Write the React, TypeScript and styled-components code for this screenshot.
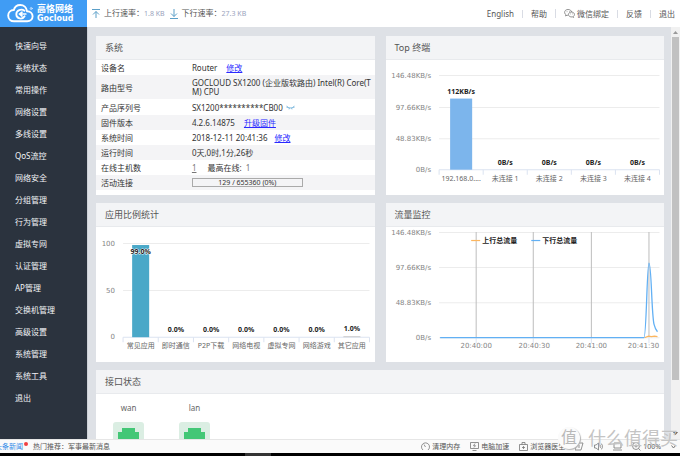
import React from "react";
import styled, { createGlobalStyle } from "styled-components";

const uiFont = `"Noto Sans", "Noto Sans CJK SC", sans-serif`;

const GlobalStyle = createGlobalStyle`
  * { box-sizing: border-box; }
  body { margin: 0; background: #dee1e6; color: #444; font: 8px/12px ${uiFont}; }
  ul { list-style: none; margin: 0; padding: 0; }
  h2 { margin: 0; }
  svg { display: block; flex: none; }
`;

const Shell = styled.div`
  position: relative;
  height: 100vh;
  display: flex;
  flex-direction: column;
  overflow: hidden;
`;

const TopBar = styled.header`
  flex: none;
  height: 27px;
  display: flex;
  align-items: stretch;
  background: #fff;
`;

const Brand = styled.a`
  width: 87px;
  display: flex;
  align-items: center;
  gap: 3px;
  padding-left: 7px;
  background: #409cf4;
  color: #fff;
  text-decoration: none;
`;

const BrandText = styled.span`
  display: flex;
  flex-direction: column;
  font-weight: 700;
`;

const BrandChinese = styled.span`
  font-size: 9px;
  line-height: 10px;
`;

const BrandLatin = styled.span`
  font: 700 8px/10px "DejaVu Sans", sans-serif;
`;

const Rates = styled.div`
  display: flex;
  align-items: center;
  gap: 5px;
  padding-left: 5px;
`;

const Rate = styled.span`
  display: flex;
  align-items: center;
  gap: 4px;
  color: #555;
  white-space: nowrap;
`;

const RateValue = styled.span`
  color: #9aa3bd;
  font-size: 7px;
`;

const TopLinks = styled.nav`
  margin-left: auto;
  display: flex;
  align-items: center;
  padding-right: 5px;
`;

const TopLink = styled.a`
  display: flex;
  align-items: center;
  gap: 2px;
  padding: 0 8px;
  line-height: 8px;
  color: #555;
  text-decoration: none;
  white-space: nowrap;
  & + & { border-left: 1px solid #d9dce4; }
  &:last-child { padding-right: 0; }
`;

const Body = styled.div`
  flex: 1;
  min-height: 0;
  display: flex;
`;

const Sidebar = styled.nav`
  flex: none;
  width: 87px;
  padding-top: 8px;
  background: #2b333e;
`;

const SideLink = styled.a`
  display: block;
  padding-left: 15px;
  line-height: 22px;
  color: #f2f4f6;
  text-decoration: none;
`;

const Main = styled.main`
  flex: 1;
  min-width: 0;
  overflow: hidden;
  display: grid;
  grid-template-columns: 1fr 1fr;
  align-content: start;
  gap: 8px 11px;
  padding: 9px 7px 0 8px;
  border-left: 1px solid #cdd1d7;
`;

const Card = styled.section<{ $wide?: boolean }>`
  grid-column: ${(p) => (p.$wide ? "1 / -1" : "auto")};
  min-width: 0;
  background: #fff;
`;

const CardTitle = styled.h2`
  height: 24px;
  padding-left: 9px;
  border-bottom: 1px solid #e8eaed;
  background: #f3f4f6;
  color: #555;
  font-size: 9px;
  font-weight: 400;
  line-height: 24px;
`;

const InfoTable = styled.table`
  width: 100%;
  border-collapse: collapse;
  color: #333;
`;

const InfoRow = styled.tr<{ $height?: number }>`
  height: ${(p) => p.$height ?? 15}px;
  &:nth-child(even) { background: #f4f4f6; }
`;

const InfoLabel = styled.th`
  width: 33%;
  padding: 0 0 0 5px;
  font-weight: 400;
  text-align: left;
  line-height: 9px;
`;

const InfoValue = styled.td`
  padding: 0 2px 0 4px;
  line-height: 9px;
`;

const ValueLine = styled.span<{ $gap?: number }>`
  display: flex;
  align-items: center;
  gap: ${(p) => p.$gap ?? 9}px;
`;

const EditLink = styled.a`
  color: #2a2aff;
`;

const CountLink = styled.a`
  color: #777;
`;

const Peak = styled.span`
  margin-left: 2px;
  color: #777;
`;

const ConnectionBar = styled.div`
  width: 111px;
  height: 9px;
  border: 1px solid #aaa;
  font-size: 7px;
  line-height: 7px;
  text-align: center;
`;

const ChartSvg = styled.svg`
  width: 100%;
  height: auto;
`;

const AxisText = styled.text`
  font: 7px "DejaVu Sans", "Noto Sans CJK SC", sans-serif;
  fill: #858585;
`;

const CategoryText = styled.text`
  font: 7px ${uiFont};
  fill: #666;
`;

const ValueText = styled.text`
  font: 700 7px ${uiFont};
  fill: #222;
  stroke: #fff;
  stroke-width: 1px;
  paint-order: stroke;
`;

const Ports = styled.ul`
  display: flex;
  padding: 8px 0 0 17px;
`;

const Port = styled.li`
  width: 66px;
`;

const PortBody = styled.div`
  width: 31px;
  display: flex;
  flex-direction: column;
  align-items: center;
  gap: 8px;
  color: #666;
`;

const ScrollTrack = styled.div`
  flex: none;
  width: 9px;
  display: flex;
  flex-direction: column;
  align-items: center;
  justify-content: space-between;
  padding: 4px 0;
  background: #f1f1f1;
`;

const ScrollThumb = styled.div`
  flex: 0 0 85%;
  width: 7px;
  margin: 3px 0 auto;
  background: #c1c1c1;
`;

const StatusBar = styled.footer`
  flex: none;
  height: 14px;
  display: flex;
  align-items: center;
  border-top: 1px solid #e6e6e6;
  background: #fafafa;
  color: #555;
  font-size: 7px;
  line-height: 12px;
  white-space: nowrap;
`;

const NewsLink = styled.a`
  display: flex;
  margin-left: -5px;
  color: #2f8ae8;
  text-decoration: none;
`;

const NewsDot = styled.span`
  width: 4px;
  height: 4px;
  margin: 1px 0 0 1px;
  border-radius: 50%;
  background: #f04040;
`;

const Hot = styled.span`
  margin-left: 5px;
`;

const Tools = styled.div`
  margin-left: auto;
  display: flex;
  align-items: center;
  gap: 10px;
  padding-right: 4px;
`;

const Tool = styled.button`
  display: flex;
  align-items: center;
  gap: 2px;
  padding: 0;
  border: 0;
  background: none;
  color: inherit;
  font: inherit;
`;

const TaskStrip = styled.div`
  flex: none;
  height: 3px;
  display: flex;
  background: #000;
`;

const TaskActive = styled.div`
  width: 26px;
  margin-left: 36%;
  background: #333;
`;

const Watermark = styled.div`
  position: absolute;
  right: 2px;
  bottom: 6px;
  display: flex;
  align-items: center;
  gap: 8px;
  color: #c4c4c4;
  font-size: 18px;
  line-height: 24px;
  pointer-events: none;
`;

const WatermarkSeal = styled.span`
  width: 22px;
  height: 22px;
  border-radius: 50%;
  background: #fbfbfb;
  box-shadow: 1px 1px 1px #b4b4b4;
  color: #b8b8b8;
  font-size: 16px;
  line-height: 21px;
  text-align: center;
`;

const menu = ["快速向导", "系统状态", "常用操作", "网络设置", "多线设置", "QoS流控", "网络安全", "分组管理", "行为管理", "虚拟专网", "认证管理", "AP管理", "交换机管理", "高级设置", "系统管理", "系统工具", "退出"];

const CloudLogo = () => (
  <svg width="27" height="19" viewBox="0 0 27 19" fill="none" stroke="#fff" strokeLinecap="round">
    <path d="M20 7.2C19.5 3.6 16.8 1 13.3 1C10 1 7.6 3 6.8 6C3.500 6 1.200 8.500 1.200 11.600C1.200 15 3.800 17.300 7 17.300H20.200C23.300 17.300 25.600 15.200 25.600 12.300C25.600 9.400 23.200 7.300 20 7.200" strokeWidth="1.900" />
    <path d="M17.500 6.800C14.500 4.600 9.300 6 9.300 10.300C9.300 15 15.500 16 17.600 12.300" strokeWidth="1.800" />
    <path d="M13 10H18.800M15 8.200L12.700 10L15 12" strokeWidth="1.700" />
    <circle cx="24.200" cy="4.500" r="1" strokeWidth=".6" />
  </svg>
);

const RateIcon = ({ down }: { down?: boolean }) => (
  <svg width="8" height="10" viewBox="0 0 8 10" fill="none" stroke="#5b9fc8" strokeWidth="1">
    {down ? <path d="M4 0V7.500M1 4.500L4 7.500L7 4.500M0 9.500H8" /> : <path d="M0 .5H8M4 9V2.500M1 5.500L4 2.500L7 5.500" />}
  </svg>
);

const WechatIcon = () => (
  <svg width="11" height="9" viewBox="0 0 11 9" fill="none" stroke="#777" strokeWidth=".8">
    <path d="M4.300 6.300L3 6.200L1.600 7L1.900 5.700C-.5 4 .6 .5 4 .5C6 .5 7.400 1.500 7.600 3" />
    <path d="M9.400 7.400L9.600 8.500L8.500 7.900C6.300 8.300 4.500 7.200 4.500 5.500C4.500 2.600 9.300 2.200 10.300 4.700C10.700 5.700 10.300 6.700 9.400 7.400Z" />
    <path d="M2.700 2.700h.7M5 2.700h.7M6.200 4.900h.6M8.300 4.900h.6" />
  </svg>
);

const EyeClosed = () => (
  <svg width="9" height="5" viewBox="0 0 9 5" fill="none" stroke="#6aaed8" strokeWidth=".9">
    <path d="M.5 .8C2 3.600 7 3.600 8.500 .8M1.500 2L.8 3M3.300 3L3 4.300M5.700 3L6 4.300M7.500 2L8.200 3" />
  </svg>
);

const PortIcon = () => (
  <svg width="31" height="31" viewBox="0 0 31 31">
    <rect width="31" height="31" rx="3" fill="#dbeee3" />
    <path d="M5 25V10H9V6H22V10H26V25Z" fill="#43c776" />
  </svg>
);

type Bar = { label: string; value: string; height: number };

type BarChartProps = {
  name: string;
  left: number;
  right: number;
  lines: { y: number; label: string }[];
  bars: Bar[];
  barWidth: number;
  color: string;
  inside?: boolean;
};

const BarChart = ({ name, left, right, lines, bars, barWidth, color, inside }: BarChartProps) => {
  const step = (right - left) / bars.length;
  const base = lines[lines.length - 1].y;
  return (
    <ChartSvg viewBox="0 0 278 135" role="img" aria-label={name}>
      {lines.map((l) => (
        <g key={l.label}>
          <path d={`M${left} ${l.y}H${right}`} stroke={l.y === base ? "#dbe3f1" : "#ececec"} />
          <AxisText x={left - 8} y={l.y + 2} textAnchor="end">{l.label}</AxisText>
        </g>
      ))}
      {Array.from({ length: bars.length + 1 }, (_, i) => (
        <path key={i} d={`M${left + i * step} ${base}v5`} stroke="#dbe3f1" />
      ))}
      {bars.map((b, i) => {
        const cx = left + (i + 0.5) * step;
        const labelY = inside && b.height > 20 ? base - b.height + 9 : base - b.height - 5;
        return (
          <g key={b.label}>
            <rect x={cx - barWidth / 2} y={base - b.height} width={barWidth} height={b.height} fill={b.height > 2 ? color : "#ccc"} />
            <ValueText x={cx} y={labelY} textAnchor="middle">{b.value}</ValueText>
            <CategoryText x={cx} y={base + 11} textAnchor="middle">{b.label}</CategoryText>
          </g>
        );
      })}
    </ChartSvg>
  );
};

const trafficLines = [
  { y: 5.5, label: "146.48KB/s" },
  { y: 40.5, label: "97.66KB/s" },
  { y: 75.5, label: "48.83KB/s" },
  { y: 110.5, label: "0B/s" },
];

const times = [
  { x: 90, tx: 90, label: "20:40:00" },
  { x: 147, tx: 148, label: "20:40:30" },
  { x: 205, tx: 205, label: "20:41:00" },
  { x: 262.5, tx: 257, label: "20:41:30" },
];

const TrafficChart = () => (
  <ChartSvg viewBox="0 0 278 135" role="img" aria-label="流量监控">
    {trafficLines.map((l) => (
      <g key={l.label}>
        <path d={`M53 ${l.y}H273`} stroke="#ececec" />
        <AxisText x="45" y={l.y + 2} textAnchor="end">{l.label}</AxisText>
      </g>
    ))}
    {times.map((t) => (
      <g key={t.label}>
        <path d={`M${t.x} 5V110`} stroke="#bdbdbd" />
        <path d={`M${t.x} 111v5`} stroke="#dbe3f1" />
        <AxisText x={t.tx} y="121" textAnchor="middle">{t.label}</AxisText>
      </g>
    ))}
    <path d="M258 110.500L262 109L265 109.500L268 109L271 109.500" fill="none" stroke="#fcb65f" strokeWidth="1.200" />
    <path d="M54 110.500H257.500C260 110.500 260.500 36 262.500 36C265 36 265 86 267.500 97C268.500 101 269.500 103 271 104.500" fill="none" stroke="#62b0f4" strokeWidth="1.300" />
    <path d="M85 13.500h9" stroke="#fcb65f" strokeWidth="1.200" />
    <ValueText x="96" y="16">上行总流量</ValueText>
    <path d="M145 13.500h9" stroke="#62b0f4" strokeWidth="1.200" />
    <ValueText x="156" y="16">下行总流量</ValueText>
  </ChartSvg>
);

const ToolIcon = ({ d }: { d: string }) => (
  <svg width="9" height="9" viewBox="0 0 9 9" fill="none" stroke="#777" strokeWidth=".8"><path d={d} /></svg>
);

const idle = (n: number): Bar => ({ label: `未连接 ${n}`, value: "0B/s", height: 0 });
const emptyApp = (label: string): Bar => ({ label, value: "0.0%", height: 0 });

export default function App() {
  return (
    <Shell>
      <GlobalStyle />
      <TopBar>
        <Brand href="#" aria-label="高恪网络 Gocloud">
          <CloudLogo />
          <BrandText>
            <BrandChinese>高恪网络</BrandChinese>
            <BrandLatin>Gocloud</BrandLatin>
          </BrandText>
        </Brand>
        <Rates>
          <Rate><RateIcon /><span>上行速率：<RateValue>1.8 KB</RateValue></span></Rate>
          <Rate><RateIcon down /><span>下行速率：<RateValue>27.3 KB</RateValue></span></Rate>
        </Rates>
        <TopLinks>
          <TopLink href="#">English</TopLink>
          <TopLink href="#">帮助</TopLink>
          <TopLink href="#"><WechatIcon />微信绑定</TopLink>
          <TopLink href="#">反馈</TopLink>
          <TopLink href="#">退出</TopLink>
        </TopLinks>
      </TopBar>

      <Body>
        <Sidebar>
          <ul>{menu.map((m) => <li key={m}><SideLink href="#">{m}</SideLink></li>)}</ul>
        </Sidebar>
        <Main>
          <Card>
            <CardTitle>系统</CardTitle>
            <InfoTable>
              <tbody>
                <InfoRow><InfoLabel scope="row">设备名</InfoLabel><InfoValue><ValueLine>Router <EditLink href="#">修改</EditLink></ValueLine></InfoValue></InfoRow>
                <InfoRow $height={24}><InfoLabel scope="row">路由型号</InfoLabel><InfoValue>GOCLOUD SX1200 (企业版软路由) Intel(R) Core(T<br />M) CPU</InfoValue></InfoRow>
                <InfoRow $height={16}><InfoLabel scope="row">产品序列号</InfoLabel><InfoValue><ValueLine $gap={3}>SX1200**********CB00 <EyeClosed /></ValueLine></InfoValue></InfoRow>
                <InfoRow><InfoLabel scope="row">固件版本</InfoLabel><InfoValue><ValueLine>4.2.6.14875 <EditLink href="#">升级固件</EditLink></ValueLine></InfoValue></InfoRow>
                <InfoRow><InfoLabel scope="row">系统时间</InfoLabel><InfoValue><ValueLine $gap={7}>2018-12-11 20:41:36 <EditLink href="#">修改</EditLink></ValueLine></InfoValue></InfoRow>
                <InfoRow><InfoLabel scope="row">运行时间</InfoLabel><InfoValue>0天,0时,1分,26秒</InfoValue></InfoRow>
                <InfoRow><InfoLabel scope="row">在线主机数</InfoLabel><InfoValue><ValueLine $gap={11}><CountLink href="#">1</CountLink><span>最高在线: <Peak>1</Peak></span></ValueLine></InfoValue></InfoRow>
                <InfoRow><InfoLabel scope="row">活动连接</InfoLabel><InfoValue><ConnectionBar>129 / 655360 (0%)</ConnectionBar></InfoValue></InfoRow>
              </tbody>
            </InfoTable>
          </Card>

          <Card>
            <CardTitle>Top 终端</CardTitle>
            <BarChart
              name="Top 终端"
              left={53}
              right={273}
              barWidth={22}
              color="#7cb5ec"
              lines={[{ y: 15.5, label: "146.48KB/s" }, { y: 47.5, label: "97.66KB/s" }, { y: 78.5, label: "48.83KB/s" }, { y: 109.5, label: "0B/s" }]}
              bars={[{ label: "192.168.0....", value: "112KB/s", height: 71 }, idle(1), idle(2), idle(3), idle(4)]}
            />
          </Card>

          <Card>
            <CardTitle>应用比例统计</CardTitle>
            <BarChart
              name="应用比例统计"
              left={27}
              right={273}
              barWidth={17}
              color="#4aa8c8"
              inside
              lines={[{ y: 16.5, label: "100" }, { y: 63.5, label: "50" }, { y: 110, label: "0" }]}
              bars={[{ label: "常见应用", value: "99.0%", height: 92 }, emptyApp("即时通信"), emptyApp("P2P下载"), emptyApp("网络电视"), emptyApp("虚拟专网"), emptyApp("网络游戏"), { label: "其它应用", value: "1.0%", height: 1 }]}
            />
          </Card>

          <Card>
            <CardTitle>流量监控</CardTitle>
            <TrafficChart />
          </Card>

          <Card $wide>
            <CardTitle>接口状态</CardTitle>
            <Ports>
              {["wan", "lan"].map((p) => <Port key={p}><PortBody>{p}<PortIcon /></PortBody></Port>)}
            </Ports>
          </Card>
        </Main>
        <ScrollTrack>
          <svg width="5" height="3" viewBox="0 0 5 3"><path d="M0 3L2.500 0L5 3Z" fill="#999" /></svg>
          <ScrollThumb />
          <svg width="5" height="3" viewBox="0 0 5 3"><path d="M0 0L2.500 3L5 0Z" fill="#555" /></svg>
        </ScrollTrack>
      </Body>

      <StatusBar>
        <NewsLink href="#">头条新闻<NewsDot /></NewsLink>
        <Hot>热门推荐：军事最新消息</Hot>
        <Tools>
          <Tool><ToolIcon d="M2 8A4 4 0 1 1 7 8M4.500 5L3 2.500" />清理内存</Tool>
          <Tool><ToolIcon d="M.5 .5H8.500V6.500H.5ZM2.500 8.500H6.500M5 1.500L3.500 3.700H5.500L4 5.500" />电脑加速</Tool>
          <Tool><ToolIcon d="M.5 2.500H8.500V8.500H.5ZM3 2.500V.5H6V2.500M4.500 4V7M3 5.500H6" />浏览器医生</Tool>
          <Tool aria-label="下载"><ToolIcon d="M2 1H8L6 8H0ZM4 3V6" /></Tool>
          <Tool aria-label="声音"><ToolIcon d="M.5 3H2L4.500 1V8L2 6H.5ZM6 3C7 4 7 5 6 6M7 1.500C9 3 9 6 7 7.500" /></Tool>
          <Tool aria-label="窗口"><ToolIcon d="M1 1H8V6H1ZM0 8H9" /></Tool>
          <Tool><ToolIcon d="M4 .5A3.500 3.500 0 1 0 4 7.500A3.500 3.500 0 1 0 4 .5M6.500 6.500L8.500 8.500M2.500 4H5.500M4 2.500V5.500" />100%</Tool>
          <Tool aria-label="展开"><svg width="5" height="4" viewBox="0 0 5 4" fill="none" stroke="#777"><path d="M.5 .5L2.500 3L4.500 .5" /></svg></Tool>
        </Tools>
      </StatusBar>
      <TaskStrip><TaskActive /></TaskStrip>
      <Watermark><WatermarkSeal>值</WatermarkSeal>什么值得买</Watermark>
    </Shell>
  );
}
